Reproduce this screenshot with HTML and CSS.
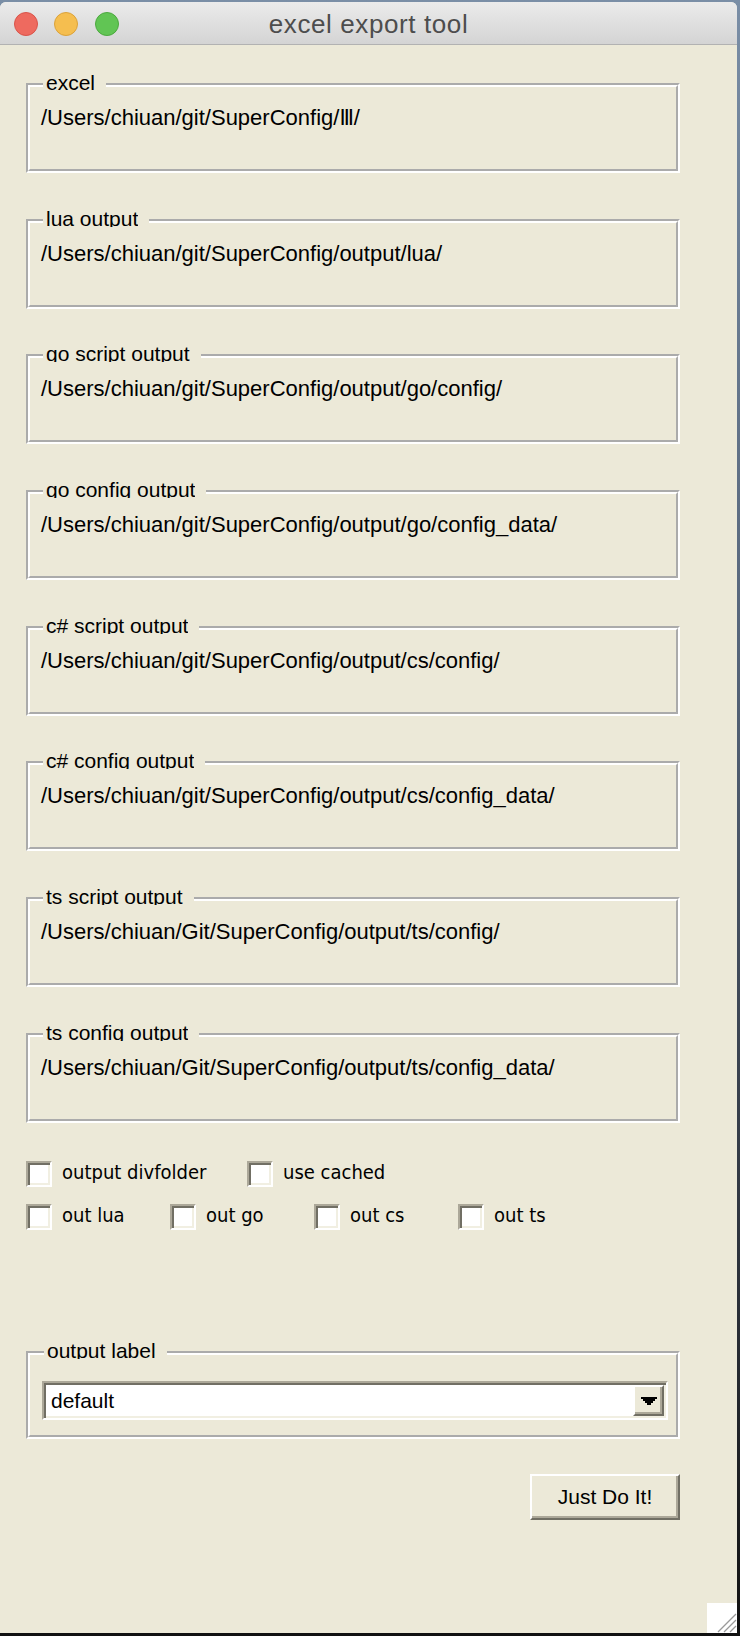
FILE: index.html
```html
<!DOCTYPE html>
<html lang="en">
<head>
<meta charset="utf-8">
<title>excel export tool</title>
<link rel="stylesheet" href="styles.css">
</head>
<body>
<div class="window">
  <div class="titlebar">
    <div class="lights">
      <span class="light red"></span>
      <span class="light yellow"></span>
      <span class="light green"></span>
    </div>
    <div class="title">excel export tool</div>
    <div></div>
  </div>
  <div class="content">
    <div class="groups">
      <fieldset class="group">
        <legend class="group-title"><span>excel</span></legend>
        <div class="group-path">/Users/chiuan/git/SuperConfig/<span class="numeral">Ⅲ</span>/</div>
      </fieldset>
      <fieldset class="group">
        <legend class="group-title"><span>lua output</span></legend>
        <div class="group-path">/Users/chiuan/git/SuperConfig/output/lua/</div>
      </fieldset>
      <fieldset class="group">
        <legend class="group-title"><span>go script output</span></legend>
        <div class="group-path">/Users/chiuan/git/SuperConfig/output/go/config/</div>
      </fieldset>
      <fieldset class="group">
        <legend class="group-title"><span>go config output</span></legend>
        <div class="group-path">/Users/chiuan/git/SuperConfig/output/go/config_data/</div>
      </fieldset>
      <fieldset class="group">
        <legend class="group-title"><span>c# script output</span></legend>
        <div class="group-path">/Users/chiuan/git/SuperConfig/output/cs/config/</div>
      </fieldset>
      <fieldset class="group">
        <legend class="group-title"><span>c# config output</span></legend>
        <div class="group-path">/Users/chiuan/git/SuperConfig/output/cs/config_data/</div>
      </fieldset>
      <fieldset class="group">
        <legend class="group-title"><span>ts script output</span></legend>
        <div class="group-path">/Users/chiuan/Git/SuperConfig/output/ts/config/</div>
      </fieldset>
      <fieldset class="group">
        <legend class="group-title"><span>ts config output</span></legend>
        <div class="group-path">/Users/chiuan/Git/SuperConfig/output/ts/config_data/</div>
      </fieldset>
    </div>

    <div class="checks">
      <div class="check-row row-a">
        <label class="check"><span class="box"></span><span class="check-text">output divfolder</span></label>
        <label class="check"><span class="box"></span><span class="check-text">use cached</span></label>
      </div>
      <div class="check-row row-b">
        <label class="check"><span class="box"></span><span class="check-text">out lua</span></label>
        <label class="check"><span class="box"></span><span class="check-text">out go</span></label>
        <label class="check"><span class="box"></span><span class="check-text">out cs</span></label>
        <label class="check"><span class="box"></span><span class="check-text">out ts</span></label>
      </div>
    </div>

    <fieldset class="group label-group">
      <legend class="group-title"><span>output label</span></legend>
      <div class="combo">
        <div class="combo-field">default</div>
        <div class="combo-btn">
          <svg width="16" height="8" viewBox="0 0 16 8"><polygon points="0,0 16,0 16,2 14,2 14,4 12,4 12,6 10,6 10,8 6,8 6,6 4,6 4,4 2,4 2,2 0,2" fill="#000"/></svg>
        </div>
      </div>
    </fieldset>

    <button class="run-btn" type="button">Just Do It!</button>
  </div>
  <div class="grip">
    <svg width="30" height="30" viewBox="0 0 30 30">
      <line x1="29" y1="11" x2="11" y2="29" stroke="#9a9a9a" stroke-width="1.2"/>
      <line x1="29" y1="17" x2="17" y2="29" stroke="#9a9a9a" stroke-width="1.2"/>
      <line x1="29" y1="23" x2="23" y2="29" stroke="#9a9a9a" stroke-width="1.2"/>
    </svg>
  </div>
</div>
</body>
</html>
```
FILE: styles.css
```css
html, body {
  margin: 0;
  padding: 0;
}
body {
  width: 740px;
  height: 1636px;
  overflow: hidden;
  padding-top: 2px;
  box-sizing: border-box;
  background: linear-gradient(to bottom, #7a8ea6 0%, #56657a 40%, #2a2f38 80%, #111 100%);
}
.window {
  position: relative;
  width: 737px;
  height: 1631px;
  background: #ece9d8;
  border-radius: 6px 6px 0 0;
  overflow: hidden;
  display: flex;
  flex-direction: column;
}
.titlebar {
  height: 42px;
  border-bottom: 1px solid #b2b2b2;
  background: linear-gradient(to bottom, #ebebeb, #d4d4d4);
  display: grid;
  grid-template-columns: 1fr auto 1fr;
  align-items: center;
  flex-shrink: 0;
}
.lights {
  display: flex;
  gap: 16.3px;
  padding-left: 14px;
  padding-top: 1px;
}
.light {
  width: 24px;
  height: 24px;
  border-radius: 50%;
  box-sizing: border-box;
}
.red { background: #ee6a5f; border: 1px solid #d9544a; }
.yellow { background: #f5be4f; border: 1px solid #dba23a; }
.green { background: #61c554; border: 1px solid #4ca93f; }
.title {
  font-family: "Liberation Sans", Arial, sans-serif;
  font-size: 26px;
  letter-spacing: 0.6px;
  color: #4d4d4d;
  line-height: 42px;
  padding-top: 1px;
}
.content {
  display: flex;
  flex-direction: column;
  width: 654px;
  padding: 29px 0 0 26px;
}
.groups {
  display: flex;
  flex-direction: column;
  gap: 36.7px;
}
.group {
  margin: 0;
  padding: 9px 8px 38px 11px;
  border: 4px groove #ffffff;
  min-inline-size: 0;
  width: 654px;
  box-sizing: border-box;
}
.group-title {
  margin-left: 2px;
  padding: 0 11px 5px 3px;
  font-size: 0;
  line-height: 0;
}
.group-title span {
  display: block;
  height: 17px;
  overflow: hidden;
  font-family: "Liberation Sans", Arial, sans-serif;
  font-size: 21px;
  line-height: 18px;
  color: #000;
  white-space: nowrap;
}
.group-path {
  font-family: "Liberation Sans", Arial, "DejaVu Sans", sans-serif;
  font-size: 22px;
  line-height: 26px;
  color: #000;
  white-space: nowrap;
}
.numeral {
  font-family: "DejaVu Sans", sans-serif;
  font-size: 21px;
}
.checks {
  margin-top: 38px;
  display: flex;
  flex-direction: column;
  gap: 17px;
}
.check-row {
  display: grid;
  height: 26px;
}
.row-a { grid-template-columns: 221px 221px; }
.row-b { grid-template-columns: repeat(4, 144px); }
.check {
  display: flex;
  align-items: center;
}
.box {
  width: 26px;
  height: 26px;
  box-sizing: border-box;
  background: #fff;
  border: 2px solid;
  border-color: #aca899 #ffffff #ffffff #aca899;
  box-shadow: inset 2px 2px 0 #716f64, inset -2px -2px 0 #f1efe2;
  flex-shrink: 0;
}
.check-text {
  margin-left: 10px;
  margin-bottom: 3px;
  font-family: "DejaVu Sans Condensed", "DejaVu Sans", sans-serif;
  font-stretch: semi-condensed;
  font-size: 20px;
  line-height: 23px;
  color: #000;
  white-space: nowrap;
}
.label-group {
  margin-top: 112px;
  padding: 17px 8px 15px 12px;
}
.combo {
  display: flex;
  height: 39px;
  box-sizing: border-box;
  border: 2px solid;
  border-color: #aca899 #ffffff #ffffff #aca899;
  box-shadow: inset 2px 2px 0 #716f64, inset -2px -2px 0 #f1efe2;
  padding: 2px;
  background: #fff;
}
.combo-field {
  flex: 1;
  padding-left: 5px;
  font-family: "Liberation Sans", Arial, sans-serif;
  font-size: 21px;
  line-height: 31px;
  color: #000;
}
.combo-btn {
  width: 31px;
  height: 31px;
  box-sizing: border-box;
  background: #ece9d8;
  border: 2px solid;
  border-color: #ffffff #716f64 #716f64 #ffffff;
  box-shadow: inset -2px -2px 0 #aca899;
  display: flex;
  align-items: center;
  justify-content: center;
  padding-top: 2px;
}
.combo-btn svg { display: block; }
.run-btn {
  align-self: flex-end;
  margin-top: 35px;
  width: 150px;
  height: 46px;
  box-sizing: border-box;
  background: #ece9d8;
  border: 2px solid;
  border-color: #ffffff #716f64 #716f64 #ffffff;
  box-shadow: inset -2px -2px 0 #aca899;
  font-family: "Liberation Sans", Arial, sans-serif;
  font-size: 21px;
  color: #000;
  padding: 0;
}
.grip {
  position: absolute;
  right: 0;
  bottom: 0;
  width: 30px;
  height: 30px;
  background: #fff;
}
.grip svg { display: block; }
```
